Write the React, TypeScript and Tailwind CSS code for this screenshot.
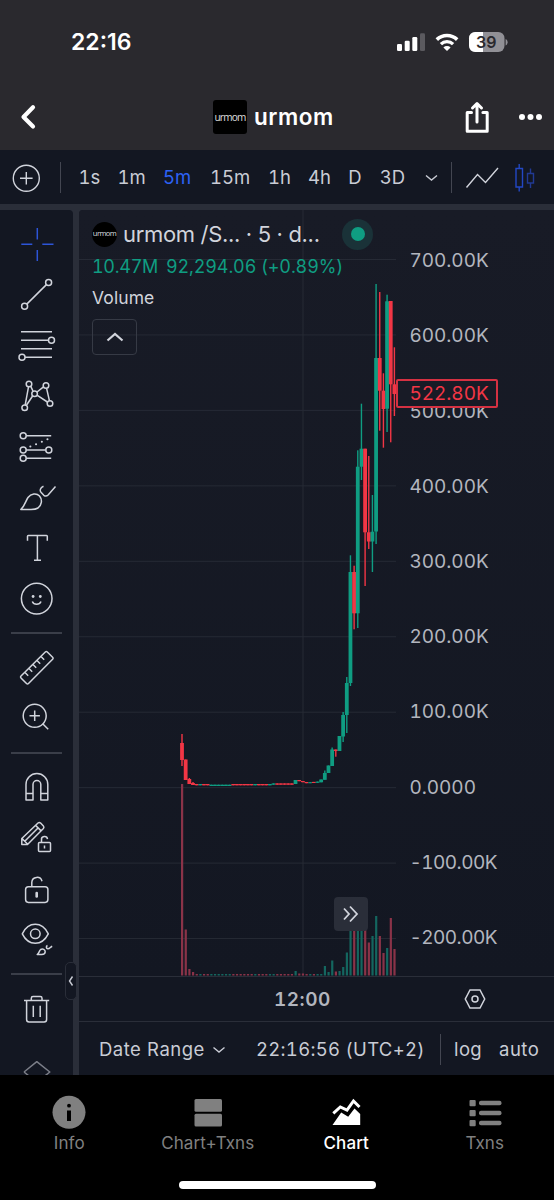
import { ReactNode } from "react";

const UP = "#0f9d82";
const DOWN = "#f23645";

type Candle = [number, number, number, number, number, boolean];

// [wick top, body top, body bottom, wick bottom, volume top, up?]
const early: Candle[] = [
  [734, 743, 760, 766, 784, false],
  [759.5, 759.5, 780, 780, 929.5, false],
  [778, 779, 784, 784, 969, false],
  [782, 783, 785, 785, 972, false],
];
const late: Candle[] = [
  [780, 780, 784, 784, 971, true],
  [780, 780, 781.2, 781.2, 973.5, false],
  [781, 781, 782.2, 782.2, 973.5, false],
  [782, 782, 783.2, 783.2, 974, false],
  [782.2, 782.2, 783.2, 783.2, 974, true],
  [781.9, 781.9, 783, 783, 974, false],
  [781.6, 781.6, 782.8, 782.8, 974, true],
  [779.5, 779.5, 782.3, 782.3, 974, true],
  [770.5, 773, 779.8, 779.8, 966, true],
  [765.5, 765.5, 773, 773, 972, true],
  [747.5, 749.5, 766, 766, 960.5, true],
  [749.5, 749.5, 751, 756.7, 971.5, false],
  [736, 736, 751, 751, 971, true],
  [712, 715, 736.5, 742, 967, true],
  [677, 683, 715, 733, 952.5, true],
  [555.3, 572, 683, 686, 922, true],
  [565.7, 572, 613.3, 629.3, 920, false],
  [450.3, 466.7, 613.3, 628, 920, true],
  [403.7, 448.7, 466.7, 480, 920, true],
  [448.7, 448.7, 532.3, 586, 920, false],
  [456, 532.3, 541.5, 549, 942.5, false],
  [495, 531.7, 541.5, 572, 936, true],
  [284, 358, 531.5, 544, 916, true],
  [292, 358, 390.7, 430.7, 936, false],
  [373.3, 390.7, 409, 447.7, 953, false],
  [294.7, 301.3, 408.7, 432, 948, true],
  [301, 301, 384.3, 442.3, 918, false],
  [347.3, 384.3, 394, 416, 949, false],
];
// flat stretch between the first dump and the pump
const flatUp = [5, 8, 9, 10, 11, 12, 13, 20, 24, 25];
const flat = Array.from({ length: 27 }, (_, k) => {
  const i = k + 4;
  const y = i > 7 && i < 14 ? 784.7 : i > 24 ? 783.4 : 784;
  return [y, y, y + 1.3, y + 1.3, 974, flatUp.includes(i)] as Candle;
});
const candles = [...early, ...flat, ...late];

const prices = ["700.00K", "600.00K", "500.00K", "400.00K", "300.00K", "200.00K", "100.00K", "0.0000", "-100.00K", "-200.00K"];

const frames = [
  { label: "1s", w: "w-[39px]" },
  { label: "1m", w: "w-[45px]" },
  { label: "5m", w: "w-[46px]", active: true },
  { label: "15m", w: "w-[60px]" },
  { label: "1h", w: "w-[39px]" },
  { label: "4h", w: "w-[41px]" },
  { label: "D", w: "w-[30px]" },
  { label: "3D", w: "w-[45px]" },
];

function StatusBar() {
  return (
    <div className="flex h-[84px] items-center pl-[71px] pr-[46px]">
      <span className="w-[62px] text-[23px] font-semibold text-white">22:16</span>
      <svg className="ml-auto" width="112" height="22" viewBox="396 30 112 22">
        <rect x="397" y="43" width="5" height="7" rx="1.3" fill="#fff" />
        <rect x="404.7" y="39.7" width="5" height="10.3" rx="1.3" fill="#fff" />
        <rect x="412.3" y="36" width="5" height="14" rx="1.3" fill="#fff" />
        <rect x="420" y="32.3" width="5" height="17.7" rx="1.3" fill="#5b5a5f" />
        <path d="M436.8 38.6a14.8 14.8 0 0 1 20.4 0" fill="none" stroke="#fff" strokeWidth="3.6" />
        <path d="M440.9 43.1a8.8 8.8 0 0 1 12.2 0" fill="none" stroke="#fff" strokeWidth="3.3" />
        <path d="M447 50l-3.6-3.6a5.2 5.2 0 0 1 7.2 0z" fill="#fff" />
        <rect x="469" y="31" width="35.5" height="20" rx="6.2" fill="#919096" />
        <path d="M483 31h-7.8a6.2 6.2 0 0 0-6.2 6.2v7.6a6.2 6.2 0 0 0 6.2 6.2h7.8z" fill="#fff" />
        <path d="M505.600 38v6.500c1.200-.5 2-1.800 2-3.200s-.8-2.800-2-3.300z" fill="#919096" />
        <text x="486.300" y="47" textAnchor="middle" className="text-[16px] font-semibold" fill="#2a292e">39</text>
      </svg>
    </div>
  );
}

function NavBar() {
  return (
    <div className="flex h-[66px] items-center pl-[18px] pr-[10px]">
      <svg width="20" height="26" viewBox="18 104 20 26" fill="none" stroke="#fff" strokeWidth="4.2">
        <path d="M33 107.300L23.500 117l9.500 9.500" strokeLinejoin="round" strokeLinecap="round" />
      </svg>
      <div className="ml-[175px] flex h-[34px] w-[34px] items-center justify-center rounded-[3px] bg-black">
        <span className="text-[10px] leading-none tracking-[-0.800px] text-[#d6d6d6]" style={{ fontFamily: '"Noto Sans", sans-serif' }}>urmom</span>
      </div>
      <span className="ml-[7px] text-[22.500px] font-semibold tracking-[0.500px] text-white">urmom</span>
      <svg className="ml-auto" width="82" height="34" viewBox="462 100 82 34" fill="none" stroke="#fff" strokeWidth="3" strokeLinecap="round" strokeLinejoin="round">
        <path d="M471.500 112.500h-4.300v18.800h20v-18.800h-4.300M477 122v-17.500M472.500 108l4.500-4.500 4.500 4.500" />
        <g fill="#fff" stroke="none">
          <circle cx="522" cy="117" r="3" />
          <circle cx="530.500" cy="117" r="3" />
          <circle cx="539" cy="117" r="3" />
        </g>
      </svg>
    </div>
  );
}

function Toolbar() {
  return (
    <div className="flex h-[54px] items-center bg-[#131722] text-[18.500px] text-[#c9ccd5]">
      <svg width="60" height="54" fill="none" stroke="#d1d4dc" strokeWidth="1.400">
        <circle cx="26.300" cy="28.300" r="13" />
        <path d="M20 28.300h12.600M26.300 22v12.600" />
      </svg>
      <div className="h-[31px] w-px bg-[#434651]" />
      <div className="ml-[9px] flex pt-[2px] tabular-nums">
        {frames.map((f) => (
          <span key={f.label} className={`${f.w} text-center ${f.active ? "text-[#2d62f5]" : ""}`}>
            {f.label}
          </span>
        ))}
      </div>
      <svg width="36" height="54" viewBox="415 150 36 54" fill="none" stroke="#c9ccd5" strokeWidth="1.400">
        <path d="M426 175.500l5.500 4.500 5.500-4.500" />
      </svg>
      <div className="h-[31px] w-px bg-[#434651]" />
      <svg width="90" height="54" viewBox="452 150 90 54" fill="none" strokeWidth="1.400">
        <path d="M466.500 187.500l11-13 8 8 12.500-14.500" stroke="#d1d4dc" />
        <path d="M516 168.500h6.500v18.500h-6.500zM519.200 164v4.500M519.200 187v4.500" stroke="#2348c4" />
        <path d="M527.500 173.500h6v9.500h-6zM530.500 168.500v5M530.500 183v5" stroke="#213a94" />
      </svg>
    </div>
  );
}

function Tool({ children }: { children: ReactNode }) {
  return (
    <svg className="shrink-0" width="73" height="51" fill="none" stroke="#d1d4dc" strokeWidth="1.500" strokeLinejoin="round">
      {children}
    </svg>
  );
}

function Divider({ className }: { className: string }) {
  return (
    <div className={`flex shrink-0 items-center pl-[11px] ${className}`}>
      <div className="h-[2px] w-[51px] bg-[#3a3e49]" />
    </div>
  );
}

function Sidebar() {
  return (
    <div className="relative h-full w-[79px] bg-[#2a2e39]">
      <div className="flex h-full w-[73px] flex-col overflow-hidden rounded-tr-[4px] bg-[#131722] pt-[8px]">
        <Tool>
          <path d="M37.300 10v11.500M37.300 32v11M21.300 26.300h11M42.300 26.300h11.200" stroke="#2d55d8" />
        </Tool>
        <Tool>
          <circle cx="24.600" cy="37.300" r="3" />
          <circle cx="48.600" cy="13.400" r="3" />
          <path d="M26.800 35.100l19.600-19.500" />
        </Tool>
        <Tool>
          <path d="M21 11.800h31M21 20.300h27.500M21 28.800h31M25 37.200h27" />
          <circle cx="51.500" cy="20.300" r="3" fill="#131722" />
          <circle cx="22" cy="37.200" r="3" />
        </Tool>
        <Tool>
          <path d="M28.500 15.800l-3.300 18M30.800 15.400l2.200 4.700M37 21l6.500-5.200M46.600 17.400l2.800 12.200M26.600 34l6-9M37 24.200l10.400 6.800" />
          <circle cx="29" cy="13" r="2.800" />
          <circle cx="46" cy="14.500" r="2.800" />
          <circle cx="34.600" cy="22.700" r="2.800" />
          <circle cx="24.700" cy="36.700" r="2.800" />
          <circle cx="50" cy="32.500" r="2.800" />
        </Tool>
        <Tool>
          <path d="M26.200 13.700h25M26.200 28h19.500M26.200 36.300h25" />
          <circle cx="23.200" cy="13.700" r="3" />
          <circle cx="23.200" cy="28" r="3" />
          <circle cx="48.800" cy="28" r="3" />
          <circle cx="23.200" cy="36.300" r="3" />
          <path d="M30.300 24.600h.1M36 22.200h.1M41.800 19.700h.1M47.400 17.200h.1" strokeWidth="2" strokeLinecap="round" />
        </Tool>
        <Tool>
          <path d="M20.800 36.500c4.700-4.500 4.700-8.500 7.200-12 3-4 8.500-4.700 11.500-1.500 3.200 3.700 2.200 9.300-1.500 12-2 1.300-4 1.500-7 1.500z" />
          <path d="M43.500 13.300c-3.500 1.500-4 4.300-2.500 6l2.800 3c1.400 1 3.200.8 4.300-.300l7.400-8.500" />
        </Tool>
        <Tool>
          <path d="M27.500 16.800v-4.500q0-.8.800-.8h18.200q.8 0 .8.800v4.500M37.400 11.500v24.700M34 36.200h7" />
        </Tool>
        <Tool>
          <circle cx="36.700" cy="23.600" r="15.300" />
          <path d="M32.300 26.500c1.500 3.800 7.200 3.800 8.700 0" />
          <circle cx="33.100" cy="21.500" r="1.400" fill="#d1d4dc" stroke="none" />
          <circle cx="40.300" cy="21.500" r="1.400" fill="#d1d4dc" stroke="none" />
        </Tool>
        <Divider className="h-[16px] pb-[2px]" />
        <Tool>
          <path d="M45.300 10q1-1 2 0l5.300 5.300q1 1 0 2L28.500 41.500q-1 1-2 0l-5.500-5.500q-1-1 0-2z" />
          <path d="M25 30.500l3.200 3.200M29 26.500l3.200 3.200M33 22.500l3.200 3.200M37 18.500l3.200 3.200M41 14.500l3.200 3.200" />
        </Tool>
        <Tool>
          <circle cx="34.700" cy="22.800" r="11.500" />
          <path d="M29.500 22.800h10.400M34.700 17.600V28M42.700 30.800l5.500 5.500" />
        </Tool>
        <Divider className="h-[18px]" />
        <Tool>
          <path d="M26 38V22.500a10.900 10.900 0 0 1 21.800 0V38h-7V22.500a3.900 3.900 0 0 0-7.800 0V38zM26 31.500h7M40.800 31.500h7" />
        </Tool>
        <Tool>
          <path d="M21.800 31.500v-6L38 10q1.300-1 2.600.1l2.800 2.900q1 1.200 0 2.500L27.500 31.500zM22 25.500l5.500 5.500M35.600 12.400l5.500 5.500M25 28l13-13" />
          <rect x="38.500" y="29.500" width="12" height="9" rx="1" />
          <path d="M41.500 29.500V27a3 3 0 0 1 6-.8M44.500 32.500v3" />
        </Tool>
        <Tool>
          <rect x="25.600" y="22.700" width="22.300" height="15.700" rx="2.800" />
          <path d="M31.800 22.700v-4.500a5.200 5.200 0 0 1 10.200-1" />
          <path d="M36.700 29v3.500" strokeWidth="2.600" strokeLinecap="round" />
        </Tool>
        <Tool>
          <path d="M22.300 18.800C28.500 6.200 42 6.200 48.300 18.800 42 31.300 28.500 31.300 22.300 18.800z" />
          <circle cx="35.300" cy="18.800" r="4.800" />
          <path d="M37.200 39.500c2-1.500 1.800-3.500 3.500-5 2-1.300 4.500 0 4.500 2.300 0 2-1.500 2.700-3.500 2.700zM47.500 30.500c-1.800.8-1.300 3 .3 3.300 1.800.2 2.700-2 4.400-2.600" />
        </Tool>
        <Divider className="h-[17px] pb-[2px]" />
        <Tool>
          <path d="M24 17.500h25.200M31.300 17.500v-2.300q0-1.700 1.700-1.700h7.300q1.700 0 1.700 1.700v2.300M26.600 17.500v19q0 2.500 2.500 2.500h15q2.500 0 2.500-2.500v-19M33.300 22.800V34M40.200 22.800V34" />
        </Tool>
        <Tool>
          <path d="M24 38l12.800-10.300L49.800 38l-5 4M24 38l5 4" stroke="#7b7e88" />
        </Tool>
      </div>
      <div className="absolute left-[65px] top-[752px] flex h-[38px] w-[12px] items-center justify-center rounded-[5px] border border-[#2a2e39] bg-[#131722]">
        <svg width="6" height="12" fill="none" stroke="#c9ccd5" strokeWidth="1.400">
          <path d="M4.500 1.500L1.500 6l3 4.500" />
        </svg>
      </div>
    </div>
  );
}

function Plot() {
  return (
    <svg className="shrink-0" width="318" height="766" viewBox="79 210 318 766">
      {prices.map((p, i) => (
        <path key={p} d={`M79 ${259.5 + i * 75.45}H396`} stroke="#262a35" />
      ))}
      <path d="M303 210V976" stroke="#262a35" />
      {candles.map(([high, top, bottom, low, vol, up], i) => {
        const x = 182 + i * 3.662;
        return (
          <g key={i} fill={up ? UP : DOWN}>
            <rect x={x - 1} y={vol} width="2.200" height={975.5 - vol} fill={up ? "#14665f" : "#8a3348"} />
            <rect x={x - 0.7} y={high} width="1.400" height={low - high} />
            <rect x={x - 1.9} y={top} width="3.800" height={bottom - top} />
          </g>
        );
      })}
    </svg>
  );
}

function Legend() {
  return (
    <div className="absolute left-[13px] top-[8px] text-[#d1d4dc]">
      <div className="flex h-[32px] items-center">
        <div className="flex h-[25px] w-[25px] items-center justify-center rounded-full bg-black">
          <span className="text-[7.500px] leading-none tracking-[-0.600px]" style={{ fontFamily: '"Noto Sans", sans-serif' }}>urmom</span>
        </div>
        <span className="ml-[6px] w-[219px] whitespace-nowrap text-[22px] tracking-[-0.330px]">urmom /S... · 5 · d...</span>
        <div className="flex h-[31px] w-[31px] items-center justify-center rounded-full bg-[#1a3238]">
          <div className="h-[14px] w-[14px] rounded-full bg-[#0f9d82]" />
        </div>
      </div>
      <div className="flex h-[32px] items-center whitespace-nowrap text-[18px] tabular-nums tracking-[-0.130px] text-[#0f9d82]">
        <span className="w-[74px] tracking-[-0.300px]">10.47M</span>
        <span>92,294.06 (+0.89%)</span>
      </div>
      <div className="flex h-[33px] items-center text-[17.500px] tracking-[0.100px]">Volume</div>
      <div className="mt-[4px] flex h-[36px] w-[45px] items-center justify-center rounded-[4px] border border-[#363a45]">
        <svg width="20" height="12" fill="none" stroke="#d1d4dc" strokeWidth="2.200">
          <path d="M2.500 9.500L10 3l7.500 6.500" />
        </svg>
      </div>
    </div>
  );
}

function Chart() {
  return (
    <div className="flex min-w-0 flex-1 flex-col overflow-hidden rounded-tl-[4px] bg-[#131722]">
      <div className="relative flex h-[766px] bg-linear-to-b from-[#181b26] to-[#131722]">
        <Plot />
        <div className="flex flex-col pl-[12.500px] pt-[13.800px] text-[19px] tabular-nums text-[#b2b5be]">
          {prices.map((p) => (
            <div key={p} className={`flex h-[75.450px] items-center ${p.startsWith("-") ? "tracking-[-0.550px]" : "tracking-[-0.050px]"}`}>
              {p}
            </div>
          ))}
        </div>
        <Legend />
        <div className="absolute left-[317px] top-[169px] flex h-[29px] w-[102px] items-center rounded-[2px] border-2 border-[#d53142] bg-[#181b26] pl-[11.500px] pt-px text-[19px] tabular-nums tracking-[-0.050px] text-[#f23645]">
          522.80K
        </div>
        <div className="absolute left-[255px] top-[687px] flex h-[34px] w-[34px] items-center justify-center rounded-[4px] bg-[#2a2e39]">
          <svg width="16" height="18" fill="none" stroke="#d1d4dc" strokeWidth="1.800">
            <path d="M1 3.500L6 9l-5 5.500M7 1.500L14 9l-7 7.500" />
          </svg>
        </div>
      </div>
      <div className="flex h-[45px] items-center border-t border-[#2a2e39] text-[19px] font-semibold text-[#b2b5be]">
        <span className="ml-[195px] mt-[2px] w-[58px] tabular-nums tracking-[0.500px]">12:00</span>
        <svg className="ml-[132px]" width="24" height="22" fill="none" stroke="#d1d4dc" strokeWidth="1.500">
          <path d="M6 2h10l4.700 9L16 20H6l-4.700-9z" />
          <circle cx="11" cy="11" r="3" />
        </svg>
      </div>
      <div className="flex h-[54px] items-center whitespace-nowrap border-t border-[#2a2e39] pl-[20px] pt-[2px] text-[18.500px] text-[#c9ccd5]">
        <span className="w-[113px] tracking-[0.500px]">Date Range</span>
        <svg width="14" height="12" fill="none" stroke="#c9ccd5" strokeWidth="1.400">
          <path d="M1.500 3.500L7 8l5.500-4.500" />
        </svg>
        <span className="ml-[30px] w-[184px] tabular-nums tracking-[0.300px]">22:16:56 (UTC+2)</span>
        <div className="h-[31px] w-px bg-[#434651]" />
        <span className="ml-[13px] w-[45px] tracking-[0.400px]">log</span>
        <span className="tracking-[0.500px]">auto</span>
      </div>
    </div>
  );
}

function Tab({ label, active, children }: { label: string; active?: boolean; children: ReactNode }) {
  return (
    <div className={`flex flex-col items-center ${active ? "font-medium text-white" : "text-[#808080]"}`}>
      <svg width="36" height="36" fill="currentColor">{children}</svg>
      <span className="mt-[1px] text-[17px] leading-[25px] tracking-[0.100px]">{label}</span>
    </div>
  );
}

function TabBar() {
  return (
    <div className="flex h-[125px] flex-col items-center bg-black">
      <div className="grid w-full grid-cols-4 pt-[19px]">
        <Tab label="Info">
          <circle cx="18" cy="18.300" r="16.500" />
          <circle cx="18" cy="11.700" r="1.900" fill="#000" />
          <path d="M16 16.500h4v10.500h-4z" fill="#000" />
        </Tab>
        <Tab label="Chart+Txns">
          <rect x="4.500" y="5" width="27.500" height="12.700" rx="1.500" />
          <rect x="4.500" y="19.700" width="27.500" height="12.700" rx="1.500" />
        </Tab>
        <Tab label="Chart" active>
          <path d="M4.500 31l8.700-12.500 7 4.200 6.300-8.200 5.700 5.500v11z" />
          <path d="M5.300 19.300l7-6.300 6.700 3.200L25.500 7l6 6" fill="none" stroke="currentColor" strokeWidth="3" />
        </Tab>
        <Tab label="Txns">
          <rect x="2.500" y="6" width="6.200" height="6.200" rx="1" />
          <rect x="2.500" y="16" width="6.200" height="6.200" rx="1" />
          <rect x="2.500" y="26" width="6.200" height="6.200" rx="1" />
          <rect x="12" y="6.700" width="22.500" height="4.600" rx="2" />
          <rect x="12" y="16.700" width="22.500" height="4.600" rx="2" />
          <rect x="12" y="26.700" width="22.500" height="4.600" rx="2" />
        </Tab>
      </div>
      <div className="mt-[25px] h-[7.500px] w-[197px] rounded-full bg-white" />
    </div>
  );
}

export default function App() {
  return (
    <div className="h-[1200px] w-[554px] overflow-hidden bg-[#2a292e]" style={{ fontFamily: "Inter, sans-serif" }}>
      <StatusBar />
      <NavBar />
      <Toolbar />
      <div className="h-[6px] bg-[#2a2e39]" />
      <div className="flex h-[865px] bg-[#2a2e39]">
        <Sidebar />
        <Chart />
      </div>
      <TabBar />
    </div>
  );
}
